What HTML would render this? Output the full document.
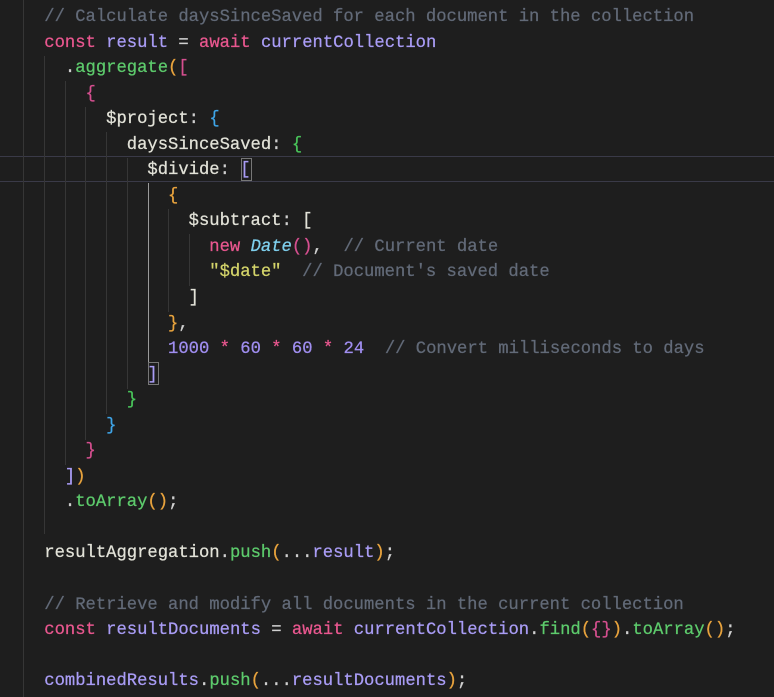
<!DOCTYPE html>
<html><head><meta charset="utf-8"><style>
html,body{margin:0;padding:0;background:#1e1e1e;width:774px;height:697px;overflow:hidden;position:relative}
pre{position:absolute;left:3px;top:5px;margin:0;font-family:"Liberation Mono",monospace;font-size:17.2px;line-height:25.55px;color:#dcdcdc;white-space:pre;-webkit-text-stroke:0.25px currentColor}
.c{color:#626a78}.k{color:#e9578f}.v{color:#a99cf5}.f{color:#5dcb6c}.p{color:#e2e2d8}.n{color:#a08ef0}.s{color:#d4d46a}.t{color:#7fd0ee;font-style:italic}
.y{color:#e8a33d}.m{color:#d54f8f}.b{color:#3fa5e8}.g{color:#49c45a}.o{color:#d0d0d0}
.g1{position:absolute;width:1px;background:#363636}
.hl{position:absolute;left:0;width:774px;height:1px;background:#3a3a48}
.box{position:absolute;border:1px solid #777;width:9px;height:21px}
</style></head><body>
<div class="hl" style="top:156px"></div><div class="hl" style="top:181px"></div>
<div class="g1" style="left:23px;top:0;height:697px"></div>
<div class="g1" style="left:44px;top:56px;height:478px"></div>
<div class="g1" style="left:65px;top:81px;height:384px"></div>
<div class="g1" style="left:85px;top:107px;height:333px"></div>
<div class="g1" style="left:106px;top:132px;height:282px"></div>
<div class="g1" style="left:127px;top:158px;height:231px"></div>
<div class="g1" style="left:148px;top:183px;height:180px;background:#9a9a9a"></div>
<div class="g1" style="left:168px;top:209px;height:103px"></div>
<div class="g1" style="left:189px;top:234px;height:52px"></div>
<div class="box" style="left:241px;top:158px"></div>
<div class="box" style="left:148px;top:362px"></div>
<pre><span class="c">    // Calculate daysSinceSaved for each document in the collection</span>
    <span class="k">const</span> <span class="v">result</span> <span class="o">=</span> <span class="k">await</span> <span class="v">currentCollection</span>
      <span class="o">.</span><span class="f">aggregate</span><span class="y">(</span><span class="m">[</span>
        <span class="m">{</span>
          <span class="p">$project</span><span class="o">:</span> <span class="b">{</span>
            <span class="p">daysSinceSaved</span><span class="o">:</span> <span class="g">{</span>
              <span class="p">$divide</span><span class="o">:</span> <span class="v">[</span>
                <span class="y">{</span>
                  <span class="p">$subtract</span><span class="o">:</span> <span class="p">[</span>
                    <span class="k">new</span> <span class="t">Date</span><span class="m">()</span><span class="o">,</span>  <span class="c">// Current date</span>
                    <span class="s">"$date"</span>  <span class="c">// Document's saved date</span>
                  <span class="p">]</span>
                <span class="y">}</span><span class="o">,</span>
                <span class="n">1000</span> <span class="k">*</span> <span class="n">60</span> <span class="k">*</span> <span class="n">60</span> <span class="k">*</span> <span class="n">24</span>  <span class="c">// Convert milliseconds to days</span>
              <span class="v">]</span>
            <span class="g">}</span>
          <span class="b">}</span>
        <span class="m">}</span>
      <span class="v">]</span><span class="y">)</span>
      <span class="o">.</span><span class="f">toArray</span><span class="y">()</span><span class="o">;</span>

    <span class="p">resultAggregation</span><span class="o">.</span><span class="f">push</span><span class="y">(</span><span class="o">...</span><span class="v">result</span><span class="y">)</span><span class="o">;</span>

<span class="c">    // Retrieve and modify all documents in the current collection</span>
    <span class="k">const</span> <span class="v">resultDocuments</span> <span class="o">=</span> <span class="k">await</span> <span class="v">currentCollection</span><span class="o">.</span><span class="f">find</span><span class="y">(</span><span class="m">{}</span><span class="y">)</span><span class="o">.</span><span class="f">toArray</span><span class="y">()</span><span class="o">;</span>

    <span class="v">combinedResults</span><span class="o">.</span><span class="f">push</span><span class="y">(</span><span class="o">...</span><span class="v">resultDocuments</span><span class="y">)</span><span class="o">;</span></pre>
</body></html>
